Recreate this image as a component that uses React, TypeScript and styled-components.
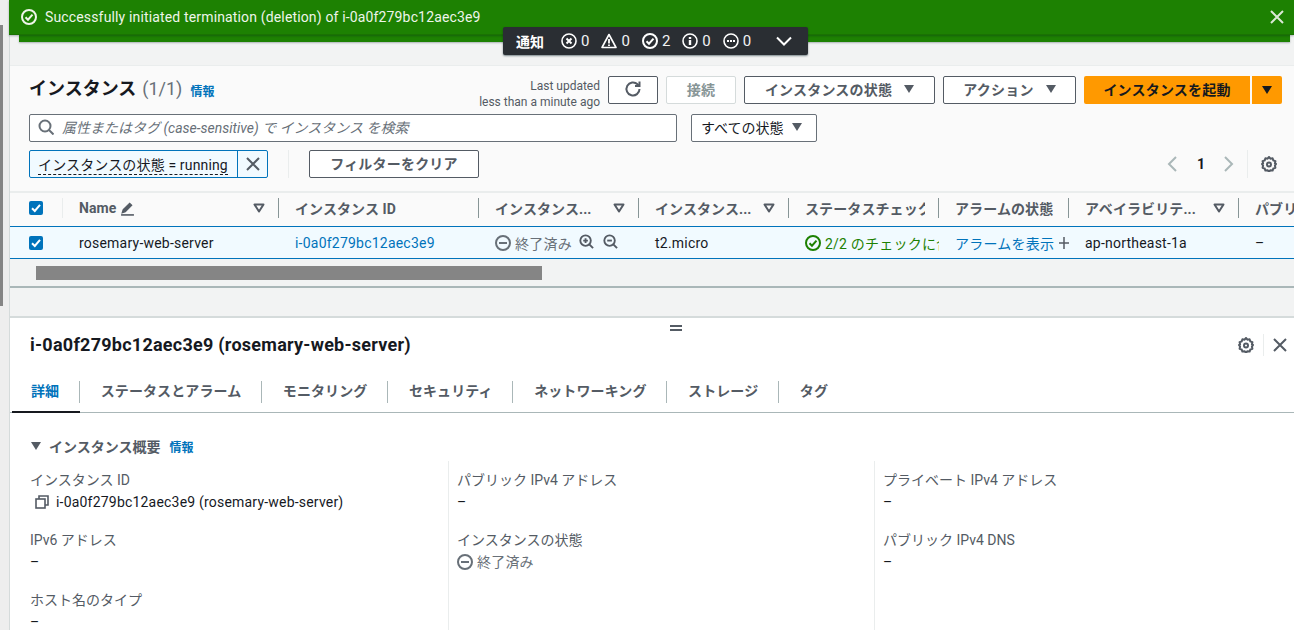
import * as React from 'react';
import styled, { createGlobalStyle } from 'styled-components';

const GlobalStyle = createGlobalStyle`
  html, body {
    margin: 0;
    padding: 0;
    height: 100%;
    overflow: hidden;
    background: #fff;
  }
  body {
    font-family: Roboto, "Noto Sans CJK JP", "Liberation Sans", sans-serif;
    font-size: 14px;
    color: #16191f;
  }
  * { box-sizing: border-box; }
  svg { flex: none; }
`;

const COLUMNS = '53px 216px 200px 160px 150px 150px 130px 170px 120px';

const Page = styled.div`
  display: flex;
  width: 1294px;
  height: 630px;
  overflow: hidden;
  position: relative;
`;

const Gutter = styled.div`
  flex: 0 0 9px;
  background: #eeeeee;
  padding-top: 25px;
`;

const GutterThumb = styled.div`
  width: 3px;
  height: 281px;
  background: #858585;
`;

const Main = styled.div`
  flex: 1;
  min-width: 0;
  background: #f2f3f3;
  border-left: 1px solid #d5dbdb;
  display: flex;
  flex-direction: column;
`;

const Flash = styled.div`
  height: 35px;
  margin-left: -1px;
  background: #1d8102;
  border-bottom: 1px solid #1a7202;
  color: #fff;
  display: flex;
  align-items: center;
  padding: 0 10px 0 12px;
  font-size: 14px;
  gap: 8px;
  position: relative;
  z-index: 1;
  box-shadow: 0 1px 2px rgba(0, 28, 36, 0.3);
`;

const FlashText = styled.span`
  flex: 1;
  color: #eef5ea;
  letter-spacing: 0.15px;
`;

const FlashStack = styled.div`
  height: 7px;
  margin: 0 4px 0 9px;
  background: #1d8102;
  box-shadow: 0 1px 2px rgba(0, 28, 36, 0.3);
`;

const Notifications = styled.div`
  position: absolute;
  left: 503px;
  top: 27px;
  width: 305px;
  height: 28px;
  z-index: 3;
  background: #2a2e33;
  border-radius: 2px;
  box-shadow: 0 1px 2px rgba(0, 28, 36, 0.5);
  color: #fff;
  display: flex;
  align-items: center;
  padding-left: 13px;
  font-size: 14px;
`;

const NotifyTitle = styled.b`
  font-size: 14px;
  margin-right: 17px;
`;

const NotifyItem = styled.span`
  display: inline-flex;
  align-items: center;
  gap: 4px;
  margin-right: 12px;
  color: #f2f3f3;
  font-size: 15px;
`;

const NotifyToggle = styled.span`
  display: inline-flex;
  margin-left: 13px;
`;

const Gap = styled.div`
  height: 24px;
  border-bottom: 1px solid #eaeded;
`;

const Header = styled.div`
  height: 125px;
  background: #fafafa;
  padding: 10px 12px 0 19px;
  display: flex;
  flex-direction: column;
`;

const HeaderRow = styled.div`
  display: flex;
  align-items: center;
  height: 28px;
`;

const Title = styled.h1`
  margin: 0 0 2px;
  font-size: 18px;
  font-weight: 700;
  line-height: 24px;
`;

const Count = styled.span`
  font-weight: 400;
  color: #687078;
  margin-left: 6px;
`;

const InfoLink = styled.a<{ $left: number }>`
  color: #0073bb;
  font-size: 12px;
  font-weight: 700;
  margin-left: ${(p) => p.$left}px;
`;

const Updated = styled.div`
  margin-left: auto;
  padding-top: 7px;
  text-align: right;
  font-size: 12px;
  line-height: 16px;
  color: #545b64;
  margin-right: 8px;
`;

const Button = styled.button<{ $width: number; $disabled?: boolean }>`
  width: ${(p) => p.$width}px;
  height: 28px;
  margin-right: 8px;
  padding: 0 0 2px;
  flex: none;
  background: #fff;
  border: 1px solid ${(p) => (p.$disabled ? '#d5dbdb' : '#545b64')};
  border-radius: 2px;
  font: inherit;
  font-weight: 700;
  letter-spacing: 0.2px;
  color: ${(p) => (p.$disabled ? '#879596' : '#545b64')};
  display: inline-flex;
  align-items: center;
  justify-content: center;
  gap: 12px;
`;

const PrimaryButton = styled.button<{ $width: number }>`
  width: ${(p) => p.$width}px;
  height: 28px;
  padding: 0 0 2px;
  background: #ff9900;
  border: 0;
  border-radius: 2px 0 0 2px;
  font: inherit;
  font-weight: 700;
  letter-spacing: 0.2px;
  color: #16191f;
  display: inline-flex;
  align-items: center;
  justify-content: center;
  & + & {
    margin-left: 2px;
    padding: 0;
    border-radius: 0 2px 2px 0;
  }
`;

const SearchRow = styled(HeaderRow)`
  margin-top: 10px;
`;

const SearchBox = styled.div`
  width: 648px;
  height: 28px;
  background: #fff;
  border: 1px solid #687078;
  border-radius: 2px;
  display: flex;
  align-items: center;
  padding: 0 0 2px 8px;
  gap: 8px;
  font-style: italic;
  color: #687078;
`;

const StateSelect = styled.div`
  margin-left: 14px;
  width: 126px;
  height: 28px;
  background: #fff;
  border: 1px solid #687078;
  border-radius: 2px;
  display: flex;
  align-items: center;
  padding: 0 0 2px 9px;
  gap: 9px;
`;

const FilterRow = styled(HeaderRow)`
  margin-top: 8px;
`;

const Token = styled.div`
  width: 239px;
  height: 28px;
  background: #f1faff;
  border: 1px solid #0073bb;
  border-radius: 2px;
  display: flex;
  align-items: center;
`;

const TokenLabel = styled.span`
  flex: 1;
  padding: 2px 0 0 8px;
`;

const TokenText = styled.span`
  border-bottom: 1px dashed #16191f;
  line-height: 18px;
  display: inline-block;
  white-space: nowrap;
  letter-spacing: 0.15px;
`;

const TokenClose = styled.span`
  width: 30px;
  height: 100%;
  border-left: 1px solid #0073bb;
  display: flex;
  align-items: center;
  justify-content: center;
`;

const VRule = styled.div<{ $height: number; $color?: string }>`
  width: 1px;
  height: ${(p) => p.$height}px;
  background: ${(p) => p.$color ?? '#eaeded'};
  flex: none;
`;

const FilterDivider = styled(VRule)`
  margin: 0 20px;
`;

const Pager = styled.div`
  margin-left: auto;
  display: flex;
  align-items: center;
  margin-right: 5px;
`;

const PageNumber = styled.b`
  margin: 0 18px 0 19px;
  font-size: 14px;
`;

const PagerDivider = styled(VRule)`
  margin: 0 13px 0 12px;
`;

const TableWrap = styled.div`
  overflow: hidden;
`;

const TableHead = styled.div`
  display: grid;
  grid-template-columns: ${COLUMNS};
  width: 1350px;
  height: 35px;
  background: #fafafa;
  border-top: 2px solid #eaeded;
  font-weight: 700;
  color: #545b64;
`;

const HeadCell = styled.div`
  display: flex;
  align-items: center;
  padding: 0 14px 3px 16px;
  position: relative;
  white-space: nowrap;
  overflow: hidden;
  justify-content: space-between;
  letter-spacing: 0.1px;
  &::after {
    content: '';
    position: absolute;
    right: 0;
    top: 5px;
    bottom: 8px;
    width: 1px;
    background: #879596;
  }
`;

const HeadCheckCell = styled.div`
  display: flex;
  align-items: center;
  padding: 0 0 3px 19px;
  position: relative;
  &::after {
    content: '';
    position: absolute;
    right: 0;
    top: 5px;
    bottom: 8px;
    width: 1px;
    background: #eaeded;
  }
`;

const HeadLabel = styled.span`
  display: inline-flex;
  align-items: center;
  gap: 4px;
  min-width: 0;
  overflow: hidden;
`;

const TableRow = styled.div`
  display: grid;
  grid-template-columns: ${COLUMNS};
  width: 1350px;
  height: 33px;
  background: #f1faff;
  border-top: 1px solid #0073bb;
  border-bottom: 1px solid #0073bb;
`;

const RowCell = styled.div<{ $tone?: 'link' | 'muted' | 'ok' }>`
  display: flex;
  align-items: center;
  padding-left: 16px;
  gap: 4px;
  white-space: nowrap;
  overflow: hidden;
  letter-spacing: 0.22px;
  color: ${(p) =>
    p.$tone === 'link'
      ? '#0073bb'
      : p.$tone === 'muted'
        ? '#687078'
        : p.$tone === 'ok'
          ? '#1d8102'
          : '#16191f'};
`;

const RowCheckCell = styled.div`
  display: flex;
  align-items: center;
  padding-left: 19px;
`;

const Check = styled.span`
  width: 14px;
  height: 14px;
  border-radius: 2px;
  background: #0073bb;
  display: flex;
  align-items: center;
  justify-content: center;
`;

const ZoomIcons = styled.span`
  display: inline-flex;
  gap: 9px;
  margin-left: 3px;
  margin-top: -2px;
`;

const AlarmPlus = styled.span`
  display: inline-flex;
  margin-top: 1px;
`;

const HScroll = styled.div`
  height: 29px;
  padding: 7px 0 0 26px;
  background: #f2f3f3;
  border-bottom: 2px solid #aab7b8;
`;

const HThumb = styled.div`
  width: 506px;
  height: 14px;
  background: #858585;
`;

const Spacer = styled.div`
  height: 30px;
  background: #f2f3f3;
  border-bottom: 2px solid #d5dbdb;
`;

const Detail = styled.div`
  flex: 1;
  min-height: 0;
  background: #fff;
  position: relative;
`;

const Splitter = styled.div`
  position: absolute;
  left: 660px;
  top: 7px;
  width: 12px;
  height: 6px;
  border-top: 2px solid #545b64;
  border-bottom: 2px solid #545b64;
`;

const DetailHead = styled.div`
  height: 53px;
  padding: 0 7px 0 20px;
  display: flex;
  align-items: center;
`;

const DetailTitle = styled.h2`
  margin: 0;
  flex: 1;
  font-size: 18px;
  font-weight: 700;
  letter-spacing: 0.25px;
`;

const DetailActions = styled.div`
  display: flex;
  align-items: center;
`;

const DetailDivider = styled(VRule)`
  margin: 0 9px;
`;

const Tabs = styled.div`
  display: flex;
  height: 42px;
  padding-left: 2px;
  border-bottom: 1px solid #aab7b8;
`;

const Tab = styled.div<{ $active?: boolean; $last?: boolean }>`
  padding: 0 20.5px 3px ${(p) => (p.$active ? 19 : 21)}px;
  display: flex;
  align-items: center;
  height: 41px;
  font-weight: 700;
  font-size: 14px;
  letter-spacing: 0.1px;
  color: ${(p) => (p.$active ? '#0073bb' : '#545b64')};
  position: relative;
  white-space: nowrap;
  ${(p) => (p.$active ? 'box-shadow: inset 0 -2px 0 #16191f; height: 42px; padding-bottom: 4px;' : '')}
  &::after {
    content: ${(p) => (p.$last ? 'none' : "''")};
    position: absolute;
    right: 0;
    top: 10px;
    height: 22px;
    width: 1px;
    background: #aab7b8;
  }
`;

const Section = styled.div`
  padding: 23px 0 0 20px;
`;

const SectionTitle = styled.div`
  display: flex;
  align-items: center;
  height: 20px;
  font-weight: 700;
  color: #545b64;
  font-size: 14px;
`;

const Caret = styled.span`
  width: 0;
  height: 0;
  border-left: 5px solid transparent;
  border-right: 5px solid transparent;
  border-top: 8px solid #545b64;
  margin: 0 8px 0 1px;
`;

const FieldGrid = styled.div`
  display: grid;
  grid-template-columns: 418px 426px 420px;
  margin-top: 5px;
`;

const FieldColumn = styled.div<{ $divided?: boolean }>`
  padding-left: ${(p) => (p.$divided ? 8 : 0)}px;
  border-left: ${(p) => (p.$divided ? '1px solid #eaeded' : '0')};
  height: 200px;
  padding-top: 9px;
`;

const Field = styled.div`
  height: 60px;
`;

const FieldLabel = styled.div`
  color: #545b64;
  line-height: 20px;
`;

const FieldValue = styled.div<{ $muted?: boolean }>`
  line-height: 20px;
  margin-top: 2px;
  display: flex;
  align-items: center;
  gap: 4px;
  letter-spacing: 0.2px;
  color: ${(p) => (p.$muted ? '#687078' : '#16191f')};
`;

const CopyValue = styled(FieldValue)`
  padding-left: 5px;
  gap: 7px;
`;

const Caret2 = styled.span<{ $color: string }>`
  width: 0;
  height: 0;
  border-left: 5.5px solid transparent;
  border-right: 5.5px solid transparent;
  border-top: 8px solid ${(p) => p.$color};
`;

const StopIcon = ({ size = 16 }: { size?: number }) => (
  <svg width={size} height={size} viewBox="0 0 16 16" fill="none" stroke="#687078" strokeWidth="2">
    <circle cx="8" cy="8" r="7" />
    <path d="M4 8h8" />
  </svg>
);

const CheckCircle = ({ color, size = 16 }: { color: string; size?: number }) => (
  <svg width={size} height={size} viewBox="0 0 16 16" fill="none" stroke={color} strokeWidth="2">
    <circle cx="8" cy="8" r="7" />
    <path d="M4.5 8.2l2.5 2.5 4.5-5" />
  </svg>
);

const CloseIcon = ({ size = 14, color = '#545b64', weight = 2 }: { size?: number; color?: string; weight?: number }) => (
  <svg width={size} height={size} viewBox="0 0 14 14" fill="none" stroke={color} strokeWidth={weight}>
    <path d="M1 1l12 12M13 1L1 13" />
  </svg>
);

const GearIcon = ({ size = 16 }: { size?: number }) => (
  <svg width={size} height={size} viewBox="0 0 16 16" fill="none" stroke="#545b64" strokeWidth="2" strokeLinejoin="round">
    <path d="M8 1l1.4 1.7 2.2-.4.7 2.1 2.1.8-.5 2.2L15 8l-1.1 1.6.5 2.1-2.1.8-.7 2.1-2.2-.4L8 15.9l-1.4-1.7-2.2.4-.7-2.1-2.1-.8.5-2.1L1 8l1.1-.6-.5-2.2 2.1-.8.7-2.1 2.2.4z" />
    <circle cx="8" cy="8.4" r="2" />
  </svg>
);

const SortIcon = () => (
  <svg width="12" height="10" viewBox="0 0 12 10" fill="none" stroke="#545b64" strokeWidth="2" strokeLinejoin="round">
    <path d="M1.5 1.5h9L6 8.5z" />
  </svg>
);

const TickMark = () => (
  <svg width="10" height="10" viewBox="0 0 10 10" fill="none" stroke="#fff" strokeWidth="2">
    <path d="M1 5.2l2.8 2.8L9 1.8" />
  </svg>
);

const ZoomGlass = ({ plus }: { plus?: boolean }) => (
  <svg width="15" height="15" viewBox="0 0 16 16" fill="none" stroke="#545b64" strokeWidth="2">
    <circle cx="7" cy="7" r="5.6" />
    <path d="M11 11l4 4" />
    <path d={plus ? 'M4.5 7h5M7 4.5v5' : 'M4.5 7h5'} />
  </svg>
);

const tabs = ['ステータスとアラーム', 'モニタリング', 'セキュリティ', 'ネットワーキング', 'ストレージ', 'タグ'];

const App = () => (
  <>
    <GlobalStyle />
    <Page>
      <Gutter>
        <GutterThumb />
      </Gutter>
      <Main>
        <Flash>
          <CheckCircle color="#eef5ea" size={16} />
          <FlashText>Successfully initiated termination (deletion) of i-0a0f279bc12aec3e9</FlashText>
          <CloseIcon size={14} color="#dbe8d5" />
        </Flash>
        <FlashStack />
        <Gap />
        <Header>
          <HeaderRow>
            <Title>
              インスタンス<Count>(1/1)</Count>
            </Title>
            <InfoLink $left={8}>情報</InfoLink>
            <Updated>
              Last updated
              <br />
              less than a minute ago
            </Updated>
            <Button $width={50}>
              <svg width="18" height="18" viewBox="0 0 18 18" fill="none" stroke="#545b64" strokeWidth="2">
                <path d="M15.5 9a6.5 6.5 0 1 1-2-4.7L15 6" />
                <path d="M15.5 1.5V6h-4.5" />
              </svg>
            </Button>
            <Button $width={70} $disabled>
              接続
            </Button>
            <Button $width={191}>
              インスタンスの状態
              <Caret2 $color="#545b64" />
            </Button>
            <Button $width={133}>
              アクション
              <Caret2 $color="#545b64" />
            </Button>
            <PrimaryButton $width={166}>インスタンスを起動</PrimaryButton>
            <PrimaryButton $width={30}>
              <Caret2 $color="#16191f" />
            </PrimaryButton>
          </HeaderRow>
          <SearchRow>
            <SearchBox>
              <svg width="16" height="16" viewBox="0 0 16 16" fill="none" stroke="#687078" strokeWidth="2">
                <circle cx="7" cy="7" r="5.5" />
                <path d="M11 11l4.5 4.5" />
              </svg>
              属性またはタグ (case-sensitive) で インスタンス を検索
            </SearchBox>
            <StateSelect>
              すべての状態
              <Caret2 $color="#545b64" />
            </StateSelect>
          </SearchRow>
          <FilterRow>
            <Token>
              <TokenLabel>
                <TokenText>インスタンスの状態 = running</TokenText>
              </TokenLabel>
              <TokenClose>
                <CloseIcon size={14} />
              </TokenClose>
            </Token>
            <FilterDivider $height={28} />
            <Button $width={170}>フィルターをクリア</Button>
            <Pager>
              <svg width="12" height="18" viewBox="0 0 12 18" fill="none" stroke="#aab7b8" strokeWidth="2">
                <path d="M10 2L3 9l7 7" />
              </svg>
              <PageNumber>1</PageNumber>
              <svg width="12" height="18" viewBox="0 0 12 18" fill="none" stroke="#aab7b8" strokeWidth="2">
                <path d="M2 2l7 7-7 7" />
              </svg>
              <PagerDivider $height={28} />
              <GearIcon />
            </Pager>
          </FilterRow>
        </Header>
        <TableWrap>
          <TableHead>
            <HeadCheckCell>
              <Check>
                <TickMark />
              </Check>
            </HeadCheckCell>
            <HeadCell>
              <HeadLabel>
                Name
                <svg width="15" height="15" viewBox="0 0 14 14" fill="none" stroke="#545b64" strokeWidth="2">
                  <path d="M2 11l1-3 6-6 2 2-6 6z" fill="#545b64" strokeWidth="1" />
                  <path d="M1 13h12" strokeWidth="1.5" />
                </svg>
              </HeadLabel>
              <SortIcon />
            </HeadCell>
            <HeadCell>
              <HeadLabel>インスタンス ID</HeadLabel>
            </HeadCell>
            <HeadCell>
              <HeadLabel>インスタンス...</HeadLabel>
              <SortIcon />
            </HeadCell>
            <HeadCell>
              <HeadLabel>インスタンス...</HeadLabel>
              <SortIcon />
            </HeadCell>
            <HeadCell>
              <HeadLabel>ステータスチェック</HeadLabel>
            </HeadCell>
            <HeadCell>
              <HeadLabel>アラームの状態</HeadLabel>
            </HeadCell>
            <HeadCell>
              <HeadLabel>アベイラビリテ...</HeadLabel>
              <SortIcon />
            </HeadCell>
            <HeadCell>
              <HeadLabel>パブリック</HeadLabel>
            </HeadCell>
          </TableHead>
          <TableRow>
            <RowCheckCell>
              <Check>
                <TickMark />
              </Check>
            </RowCheckCell>
            <RowCell>rosemary-web-server</RowCell>
            <RowCell $tone="link">i-0a0f279bc12aec3e9</RowCell>
            <RowCell $tone="muted">
              <StopIcon />
              終了済み
              <ZoomIcons>
                <ZoomGlass plus />
                <ZoomGlass />
              </ZoomIcons>
            </RowCell>
            <RowCell>t2.micro</RowCell>
            <RowCell $tone="ok">
              <CheckCircle color="#1d8102" />
              2/2 のチェックに合格しました
            </RowCell>
            <RowCell $tone="link">
              アラームを表示
              <AlarmPlus>
                <svg width="12" height="14" viewBox="0 0 12 14" fill="none" stroke="#545b64" strokeWidth="1.5">
                  <path d="M1 7h10M6 1v12" />
                </svg>
              </AlarmPlus>
            </RowCell>
            <RowCell>ap-northeast-1a</RowCell>
            <RowCell>–</RowCell>
          </TableRow>
        </TableWrap>
        <HScroll>
          <HThumb />
        </HScroll>
        <Spacer />
        <Detail>
          <Splitter />
          <DetailHead>
            <DetailTitle>i-0a0f279bc12aec3e9 (rosemary-web-server)</DetailTitle>
            <DetailActions>
              <GearIcon />
              <DetailDivider $height={22} />
              <CloseIcon size={14} />
            </DetailActions>
          </DetailHead>
          <Tabs>
            <Tab $active>詳細</Tab>
            {tabs.map((tab, i) => (
              <Tab key={tab} $last={i === tabs.length - 1}>
                {tab}
              </Tab>
            ))}
          </Tabs>
          <Section>
            <SectionTitle>
              <Caret />
              インスタンス概要
              <InfoLink $left={9}>情報</InfoLink>
            </SectionTitle>
            <FieldGrid>
              <FieldColumn>
                <Field>
                  <FieldLabel>インスタンス ID</FieldLabel>
                  <CopyValue>
                    <svg width="14" height="14" viewBox="0 0 14 14" fill="none" stroke="#545b64" strokeWidth="1.6">
                      <path d="M4 4V1h9v9h-3" />
                      <rect x="1" y="4" width="9" height="9" />
                    </svg>
                    i-0a0f279bc12aec3e9 (rosemary-web-server)
                  </CopyValue>
                </Field>
                <Field>
                  <FieldLabel>IPv6 アドレス</FieldLabel>
                  <FieldValue>–</FieldValue>
                </Field>
                <Field>
                  <FieldLabel>ホスト名のタイプ</FieldLabel>
                  <FieldValue>–</FieldValue>
                </Field>
              </FieldColumn>
              <FieldColumn $divided>
                <Field>
                  <FieldLabel>パブリック IPv4 アドレス</FieldLabel>
                  <FieldValue>–</FieldValue>
                </Field>
                <Field>
                  <FieldLabel>インスタンスの状態</FieldLabel>
                  <FieldValue $muted>
                    <StopIcon />
                    終了済み
                  </FieldValue>
                </Field>
              </FieldColumn>
              <FieldColumn $divided>
                <Field>
                  <FieldLabel>プライベート IPv4 アドレス</FieldLabel>
                  <FieldValue>–</FieldValue>
                </Field>
                <Field>
                  <FieldLabel>パブリック IPv4 DNS</FieldLabel>
                  <FieldValue>–</FieldValue>
                </Field>
              </FieldColumn>
            </FieldGrid>
          </Section>
        </Detail>
      </Main>
      <Notifications>
        <NotifyTitle>通知</NotifyTitle>
        <NotifyItem>
          <svg width="16" height="16" viewBox="0 0 16 16" fill="none" stroke="#fff" strokeWidth="1.6">
            <circle cx="8" cy="8" r="7" />
            <path d="M5.5 5.5l5 5M10.5 5.5l-5 5" strokeWidth="2" />
          </svg>
          0
        </NotifyItem>
        <NotifyItem>
          <svg width="16" height="16" viewBox="0 0 16 16" fill="none" stroke="#fff" strokeWidth="1.6" strokeLinejoin="round">
            <path d="M8 1.5L15 14.5H1z" />
            <path d="M8 6v4.5M8 11.5v1.5" strokeWidth="1.8" />
          </svg>
          0
        </NotifyItem>
        <NotifyItem>
          <CheckCircle color="#fff" />
          2
        </NotifyItem>
        <NotifyItem>
          <svg width="16" height="16" viewBox="0 0 16 16" fill="none" stroke="#fff" strokeWidth="1.6">
            <circle cx="8" cy="8" r="7" />
            <path d="M8 7v5M8 4v2" strokeWidth="2.4" />
          </svg>
          0
        </NotifyItem>
        <NotifyItem>
          <svg width="16" height="16" viewBox="0 0 16 16" fill="none" stroke="#fff" strokeWidth="1.6">
            <circle cx="8" cy="8" r="7" />
            <path d="M4 8h2M7 8h2M10 8h2" strokeWidth="2" />
          </svg>
          0
        </NotifyItem>
        <NotifyToggle>
          <svg width="16" height="10" viewBox="0 0 16 10" fill="none" stroke="#fff" strokeWidth="2">
            <path d="M1 1.5l7 7 7-7" />
          </svg>
        </NotifyToggle>
      </Notifications>
    </Page>
  </>
);

export default App;
